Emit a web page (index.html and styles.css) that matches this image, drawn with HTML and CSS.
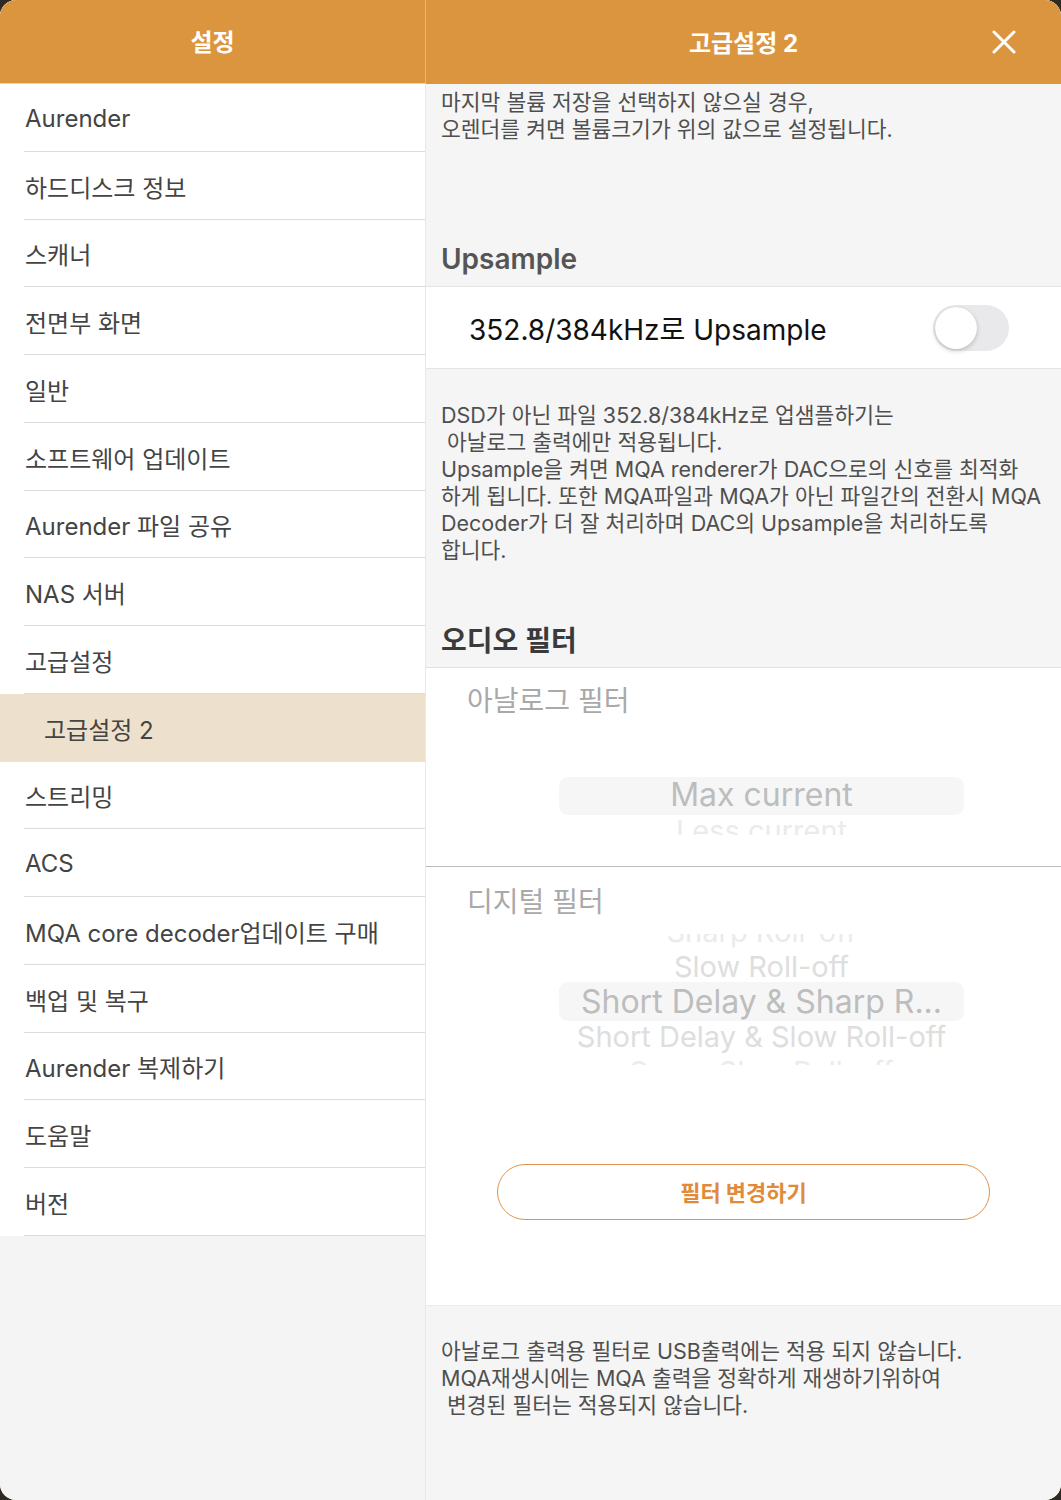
FILE: index.html
```html
<!DOCTYPE html>
<html lang="ko">
<head>
<meta charset="utf-8">
<title>고급설정 2</title>
<link rel="stylesheet" href="styles.css">
</head>
<body>
<div class="app">
  <aside class="side">
    <header class="bar bar-side">설정</header>
    <ul class="menu">
      <li class="item">Aurender</li>
      <li class="item">하드디스크 정보</li>
      <li class="item">스캐너</li>
      <li class="item">전면부 화면</li>
      <li class="item">일반</li>
      <li class="item">소프트웨어 업데이트</li>
      <li class="item">Aurender 파일 공유</li>
      <li class="item">NAS 서버</li>
      <li class="item">고급설정</li>
      <li class="item item-active">고급설정 2</li>
      <li class="item">스트리밍</li>
      <li class="item">ACS</li>
      <li class="item">MQA core decoder업데이트 구매</li>
      <li class="item">백업 및 복구</li>
      <li class="item">Aurender 복제하기</li>
      <li class="item">도움말</li>
      <li class="item">버전</li>
    </ul>
  </aside>
  <main class="detail">
    <header class="bar bar-detail">
      <span class="bar-title">고급설정 2</span>
      <button class="close" aria-label="닫기">
        <svg width="24" height="24" viewBox="0 0 24 24"><path d="M2 2 L22 22 M22 2 L2 22" stroke="#fff" stroke-width="3" stroke-linecap="round" fill="none"/></svg>
      </button>
    </header>
    <p class="note note-top">마지막 볼륨 저장을 선택하지 않으실 경우,<br>오렌더를 켜면 볼륨크기가 위의 값으로 설정됩니다.</p>
    <h2 class="sec sec-up">Upsample</h2>
    <div class="cell">
      <span class="cell-label">352.8/384kHz로 Upsample</span>
      <span class="toggle"><span class="knob"></span></span>
    </div>
    <p class="note note-mid">DSD가 아닌 파일 352.8/384kHz로 업샘플하기는<br>&nbsp;아날로그 출력에만 적용됩니다.<br>Upsample을 켜면 MQA renderer가 DAC으로의 신호를 최적화<br>하게 됩니다. 또한 MQA파일과 MQA가 아닌 파일간의 전환시 MQA<br>Decoder가 더 잘 처리하며 DAC의 Upsample을 처리하도록<br>합니다.</p>
    <h2 class="sec sec-filter">오디오 필터</h2>
    <section class="filters">
      <div class="fgroup fgroup-analog">
        <h3 class="ftitle">아날로그 필터</h3>
        <div class="picker picker-analog">
          <div class="band"></div>
          <div class="opts">
            <div class="opt opt-sel">Max current</div>
            <div class="opt opt-far">Less current</div>
          </div>
        </div>
      </div>
      <div class="fgroup fgroup-digital">
        <h3 class="ftitle">디지털 필터</h3>
        <div class="picker picker-digital">
          <div class="band"></div>
          <div class="opts">
            <div class="opt opt-far">Sharp Roll-off</div>
            <div class="opt opt-near">Slow Roll-off</div>
            <div class="opt opt-sel">Short Delay &amp; Sharp R...</div>
            <div class="opt opt-near">Short Delay &amp; Slow Roll-off</div>
            <div class="opt opt-far">Super Slow Roll-off</div>
          </div>
        </div>
        <button class="apply">필터 변경하기</button>
      </div>
    </section>
    <p class="note note-bottom">아날로그 출력용 필터로 USB출력에는 적용 되지 않습니다.<br>MQA재생시에는 MQA 출력을 정확하게 재생하기위하여<br>&nbsp;변경된 필터는 적용되지 않습니다.</p>
  </main>
</div>
</body>
</html>
```
FILE: styles.css
```css
* { box-sizing: border-box; }
html, body { margin: 0; padding: 0; }
body {
  background: #2c2a22;
  font-family: "Inter", "Noto Sans CJK KR", sans-serif;
  width: 1061px;
  height: 1500px;
  overflow: hidden;
}
.app {
  display: flex;
  width: 1061px;
  height: 1500px;
  border-radius: 16px;
  overflow: hidden;
  background: #f5f5f5;
}
.side {
  width: 426px;
  flex: none;
  background: #f4f4f4;
  border-right: 1px solid #e8e8e8;
  display: flex;
  flex-direction: column;
}
.bar {
  height: 84px;
  flex: none;
  background: #db953f;
  color: #fff;
  font-weight: 700;
  font-size: 24px;
  display: flex;
  align-items: center;
  justify-content: center;
  padding-bottom: 2px;
}
.bar-side {
  margin-right: -1px;
  border-right: 1px solid #e7b47a;
  border-bottom: 1px solid #e0d6c8;
}
.menu {
  list-style: none;
  margin: 0;
  padding: 0;
  background: #fff;
}
.item {
  height: 67.76px;
  margin-left: 24px;
  border-bottom: 1px solid #dcdcdc;
  display: flex;
  align-items: center;
  padding-left: 1px;
  padding-top: 2px;
  font-size: 24px;
  color: #444;
  white-space: nowrap;
}
.item-active {
  margin-left: 0;
  padding-left: 44px;
  background: #ede1cd;
  border-bottom-color: #ede1cd;
}
.detail {
  flex: 1;
  display: flex;
  flex-direction: column;
  background: #f5f5f5;
}
.bar-detail {
  position: relative;
}
.bar-title { display: block; }
.close {
  position: absolute;
  right: 45px;
  top: 30px;
  width: 24px;
  height: 24px;
  padding: 0;
  border: 0;
  background: none;
  display: flex;
}
.note {
  margin: 0;
  font-size: 21.5px;
  line-height: 27px;
  color: #4f4f4f;
  padding-left: 15px;
  white-space: nowrap;
}
.note-top { padding-top: 5px; }
.note-mid { padding-top: 32.5px; }
.note-bottom { padding-top: 32px; }
.sec {
  margin: 0;
  font-size: 28px;
  line-height: 34px;
  font-weight: 600;
  color: #555;
  padding-left: 15px;
  padding-bottom: 10px;
}
.sec-up { padding-top: 99px; }
.sec-filter { padding-top: 60.5px; padding-bottom: 9px; color: #3a3a3a; }
.cell {
  height: 83px;
  background: #fff;
  border-top: 1px solid #e4e4e4;
  border-bottom: 1px solid #e4e4e4;
  display: flex;
  align-items: center;
  justify-content: space-between;
  padding-left: 43px;
  padding-right: 52px;
}
.cell-label {
  font-size: 28px;
  color: #111;
}
.toggle {
  width: 76px;
  height: 46px;
  border-radius: 23px;
  background: #e9e9eb;
  padding: 2px;
  display: flex;
}
.knob {
  width: 42px;
  height: 42px;
  border-radius: 50%;
  background: #fff;
  box-shadow: 0 2px 5px rgba(0,0,0,0.18), 0 0 1px rgba(0,0,0,0.15);
}
.filters {
  background: #fff;
  border-top: 1px solid #e2e2e2;
  border-bottom: 1px solid #ececec;
  display: flex;
  flex-direction: column;
}
.fgroup { display: flex; flex-direction: column; }
.fgroup-analog {
  height: 199px;
  border-bottom: 1px solid #bcbcbc;
}
.fgroup-digital { padding-bottom: 85px; }
.ftitle {
  margin: 0;
  padding: 16px 0 0 41px;
  font-size: 28px;
  line-height: 34px;
  font-weight: 400;
  color: #a9a9a9;
}
.fgroup-digital .ftitle { padding-top: 18px; }
.picker {
  position: relative;
  margin-left: 41px;
  width: 589px;
  overflow: hidden;
}
.picker-analog { height: 117px; }
.picker-digital { height: 131px; margin-top: 15px; }
.band {
  position: absolute;
  left: 92px;
  width: 405px;
  border-radius: 9px;
  background: #f6f6f6;
}
.picker-analog .band { top: 59px; height: 38px; }
.picker-digital .band { top: 48px; height: 39px; }
.opts {
  position: relative;
  display: flex;
  flex-direction: column;
  align-items: center;
}
.picker-analog .opts { padding-top: 59px; }
.picker-digital .opts { margin-top: -20.5px; }
.opt {
  height: 36px;
  line-height: 36px;
  white-space: nowrap;
  font-size: 29px;
  color: #e1e1e1;
}
.picker-digital .opt { height: 35px; line-height: 35px; }
.opt-sel { font-size: 32px; color: #bdbdbd; }
.opt-near { color: #dedede; }
.opt-far { color: #ebebeb; }
.apply {
  align-self: flex-start;
  margin: 99px 0 0 71px;
  width: 493px;
  height: 56px;
  border: 1.5px solid #e0934a;
  border-radius: 28px;
  background: #fff;
  color: #e08b3b;
  font-family: inherit;
  font-size: 22px;
  font-weight: 700;
  padding-bottom: 4px;
}
```
